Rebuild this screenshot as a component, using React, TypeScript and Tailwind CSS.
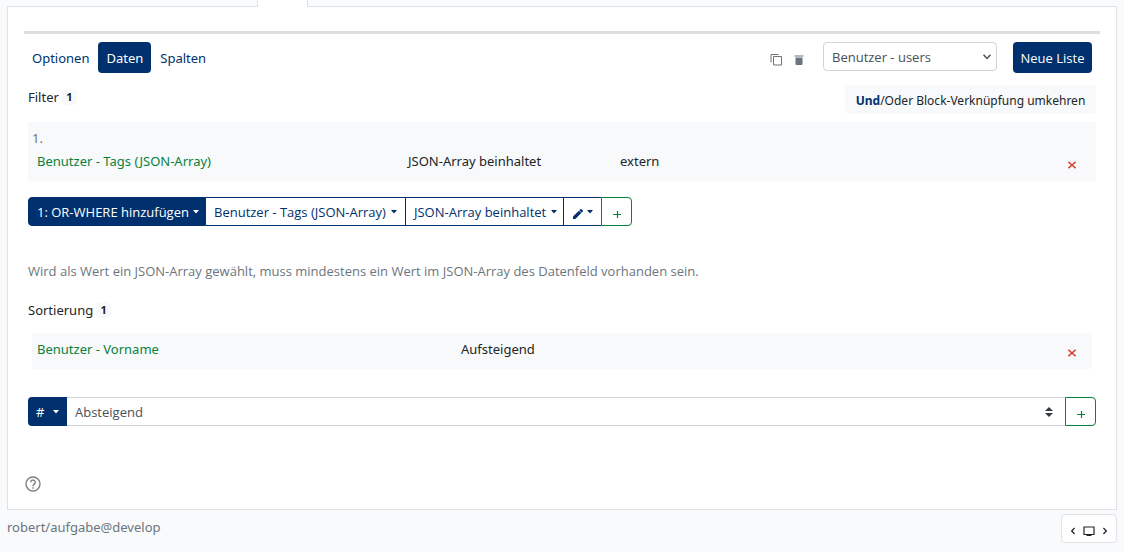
import React, { useState } from "react";
import clsx from "clsx";

const tabs = ["Optionen", "Daten", "Spalten"];

function Caret() {
  return (
    <svg className="h-1 w-1.5 shrink-0" viewBox="0 0 6 4" fill="currentColor" aria-hidden="true">
      <path d="M0 0h6L3 3.4z" />
    </svg>
  );
}

function Cross() {
  return (
    <svg className="size-2" viewBox="0 0 8 8" fill="none" stroke="currentColor" strokeWidth="1.6" aria-hidden="true">
      <path d="M0.3 0.8 7.7 7.2M7.7 0.8 0.3 7.2" />
    </svg>
  );
}

function Plus() {
  return (
    <svg className="mt-1 size-2" viewBox="0 0 8 8" fill="none" stroke="currentColor" strokeWidth="1.2" aria-hidden="true">
      <path d="M0 4.5h8M4.5 1v7" />
    </svg>
  );
}

function Count({ value }: { value: number }) {
  return (
    <span className="ml-[3px] flex h-4 w-[15px] items-center justify-center rounded bg-[#f8f9fa] text-[11px] font-bold">
      {value}
    </span>
  );
}

export default function App() {
  const [active, setActive] = useState("Daten");
  const [source, setSource] = useState("users");
  const [order, setOrder] = useState("desc");

  return (
    <div className="min-h-screen bg-[#f8fafc] px-[7px] font-['Noto_Sans','Segoe_UI',sans-serif] text-[13px] leading-5 text-[#212529]">
      {/* Lower edge of the outer tab bar */}
      <div className="flex h-[7px]">
        <div className="w-[250px] border-b border-[#dee2e6]" />
        <div className="w-[51px] border-x border-[#dee2e6] bg-white" />
        <div className="flex-1 border-b border-[#dee2e6]" />
      </div>

      <main className="border border-t-0 border-[#dee2e6] bg-white px-4 pt-6 pb-[17px]">
        <hr className="border-t-[3px] border-[#dedede]" />

        <div className="mt-2 flex items-start pr-2">
          <nav className="flex gap-px">
            {tabs.map((tab) => (
              <a
                key={tab}
                href="#"
                onClick={() => setActive(tab)}
                className={clsx(
                  "rounded px-2 pt-1.5 pb-[5px]",
                  active === tab ? "bg-[#00316e] text-white" : "text-[#00316e]"
                )}
              >
                {tab}
              </a>
            ))}
          </nav>

          <div className="mt-3 ml-auto flex text-[#6c757d]">
            <button type="button" aria-label="Liste kopieren" className="cursor-pointer">
              <svg className="size-3" viewBox="0 0 12 12" fill="none" stroke="currentColor" aria-hidden="true">
                <path d="M1 8.5v-8h7.5M3.5 2.5h8v8.5h-8z" />
              </svg>
            </button>
            <button type="button" aria-label="Liste löschen" className="ml-3 cursor-pointer">
              <svg className="size-2.5" viewBox="0 0 10 10" fill="currentColor" aria-hidden="true">
                <path d="M0.5 0.5h9v1h-9zM1.5 2.5h7v6.5a1 1 0 0 1-1 1h-5a1 1 0 0 1-1-1z" />
              </svg>
            </button>
          </div>

          <div className="relative ml-[19px]">
            <select
              aria-label="Datenquelle"
              value={source}
              onChange={(e) => setSource(e.target.value)}
              className="h-[29px] w-[174px] appearance-none rounded border border-[#ced4da] bg-white px-2 font-['Open_Sans',sans-serif] text-[#495057]"
            >
              <option value="users">Benutzer - users</option>
            </select>
            <svg
              className="pointer-events-none absolute top-3 right-1.5 h-1.5 w-2"
              viewBox="0 0 8 6"
              fill="none"
              stroke="#495057"
              strokeWidth="1.5"
              aria-hidden="true"
            >
              <path d="M0.5 0.7 4 4.5 7.5 0.7" />
            </svg>
          </div>

          <button
            type="button"
            className="ml-4 h-[31px] w-[79px] cursor-pointer rounded bg-[#00316e] font-['Open_Sans',sans-serif] text-white"
          >
            Neue Liste
          </button>
        </div>

        <section className="px-1">
          <div className="mt-3 flex items-start justify-between">
            <h2 className="flex items-center pt-0.5">
              Filter
              <Count value={1} />
            </h2>
            <button type="button" className="h-[29px] w-[251px] cursor-pointer rounded bg-[#f8f9fa] pt-0.5 text-xs">
              <b className="text-[#00316e]">Und</b>/Oder Block-Verknüpfung umkehren
            </button>
          </div>

          <div className="mt-2 bg-[#f8f9fa] px-1 pt-1.5 pb-2.5">
            <div className="text-[#6c757d]">1.</div>
            <div className="mt-[3px] flex pr-4 pl-[5px]">
              <span className="w-[371px] text-[#08813f]">Benutzer - Tags (JSON-Array)</span>
              <span className="w-[212px]">JSON-Array beinhaltet</span>
              <span className="flex-1">extern</span>
              <button type="button" aria-label="Filter entfernen" className="mt-2 cursor-pointer text-[#d93a2f]">
                <Cross />
              </button>
            </div>
          </div>

          <div className="mt-4 flex h-[29px] font-['Open_Sans',sans-serif] text-[#00316e]">
            <button
              type="button"
              className="flex w-[178px] cursor-pointer items-center justify-between rounded-l border border-[#00316e] bg-[#00316e] pr-1.5 pl-2 whitespace-nowrap text-white"
            >
              1: OR-WHERE hinzufügen
              <Caret />
            </button>
            <button
              type="button"
              className="flex w-[200px] cursor-pointer items-center justify-between border-y border-r border-[#00316e] px-2 whitespace-nowrap"
            >
              Benutzer - Tags (JSON-Array)
              <Caret />
            </button>
            <button
              type="button"
              className="flex w-[157px] cursor-pointer items-center justify-between border-y border-[#00316e] pr-1.5 pl-2 whitespace-nowrap"
            >
              JSON-Array beinhaltet
              <Caret />
            </button>
            <button
              type="button"
              aria-label="Wert bearbeiten"
              className="flex w-[38px] cursor-pointer items-center justify-center gap-1 border-y border-l border-[#00316e]"
            >
              <svg className="mt-1 size-2.5" viewBox="0 0 10 10" fill="currentColor" aria-hidden="true">
                <path d="M0 10V7.6L5.9 1.7 8.3 4.1 2.4 10zM6.3 1.3 7.4.2a.7.7 0 0 1 1 0l1.4 1.4a.7.7 0 0 1 0 1L8.700 3.700z" />
              </svg>
              <Caret />
            </button>
            <button
              type="button"
              aria-label="Filter hinzufügen"
              className="flex w-[31px] cursor-pointer items-center justify-center rounded-r border border-[#08813f] text-[#08813f]"
            >
              <Plus />
            </button>
          </div>

          <p className="mt-[35px] font-['Open_Sans',sans-serif] text-[#6c757d]">
            Wird als Wert ein JSON-Array gewählt, muss mindestens ein Wert im JSON-Array des Datenfeld vorhanden sein.
          </p>
        </section>

        <section className="mt-[19px] px-1">
          <h2 className="flex items-center">
            Sortierung
            <Count value={1} />
          </h2>

          <div className="mx-1 mt-[13px] flex h-9 items-center bg-[#f8f9fa] pr-4 pl-[5px]">
            <span className="mb-1 w-[424px] text-[#08813f]">Benutzer - Vorname</span>
            <span className="mb-1 flex-1">Aufsteigend</span>
            <button type="button" aria-label="Sortierung entfernen" className="mt-1 cursor-pointer text-[#d93a2f]">
              <Cross />
            </button>
          </div>

          <div className="mt-7 flex h-[29px] font-['Open_Sans',sans-serif]">
            <button
              type="button"
              aria-label="Sortierfeld"
              className="flex w-[39px] cursor-pointer items-center justify-between rounded-l bg-[#00316e] px-2 text-white"
            >
              #
              <Caret />
            </button>
            <div className="relative flex-1">
              <select
                aria-label="Sortierrichtung"
                value={order}
                onChange={(e) => setOrder(e.target.value)}
                className="h-full w-full appearance-none border-y border-[#ced4da] bg-white px-2 text-[#495057]"
              >
                <option value="asc">Aufsteigend</option>
                <option value="desc">Absteigend</option>
              </select>
              <svg
                className="pointer-events-none absolute top-2.5 right-3 h-2.5 w-2"
                viewBox="0 0 8 10"
                fill="#343a40"
                aria-hidden="true"
              >
                <path d="M4 0 8 4H0zM4 10 0 6h8z" />
              </svg>
            </div>
            <button
              type="button"
              aria-label="Sortierung hinzufügen"
              className="flex w-[31px] cursor-pointer items-center justify-center rounded-r border border-[#08813f] text-[#08813f]"
            >
              <Plus />
            </button>
          </div>
        </section>

        <button type="button" aria-label="Hilfe" className="mt-[50px] ml-px block cursor-pointer text-[#7c8083]">
          <svg className="size-4" viewBox="0 0 16 16" fill="none" stroke="currentColor" strokeWidth="1.4" aria-hidden="true">
            <circle cx="8" cy="8" r="7" />
            <path d="M5.7 6.3a2.3 2.2 0 1 1 3.7 1.7C8.5 8.7 8 9 8 10.2M8 11.3v1.4" />
          </svg>
        </button>
      </main>

      <footer className="flex items-start justify-between pt-1">
        <span className="pt-[3px] text-[#6c757d]">robert/aufgabe@develop</span>
        <div className="flex h-[29px] w-14 items-center justify-center gap-2 rounded border border-[#dee2e6] bg-white pt-1">
          <button type="button" aria-label="Zurück" className="cursor-pointer">
            <svg className="h-2 w-1" viewBox="0 0 4 8" fill="none" stroke="#212529" strokeWidth="1.3" aria-hidden="true">
              <path d="M3.6 1 0.7 4 3.6 7" />
            </svg>
          </button>
          <button type="button" aria-label="Ansicht" className="cursor-pointer">
            <svg className="h-2.5 w-3" viewBox="0 0 12 10" fill="none" stroke="#212529" strokeWidth="1.2" aria-hidden="true">
              <path d="M1 1h10v7.5H1zM3.5 9.5h5" />
            </svg>
          </button>
          <button type="button" aria-label="Weiter" className="cursor-pointer">
            <svg className="h-2 w-1" viewBox="0 0 4 8" fill="none" stroke="#212529" strokeWidth="1.3" aria-hidden="true">
              <path d="M0.4 1 3.3 4 0.4 7" />
            </svg>
          </button>
        </div>
      </footer>
    </div>
  );
}
